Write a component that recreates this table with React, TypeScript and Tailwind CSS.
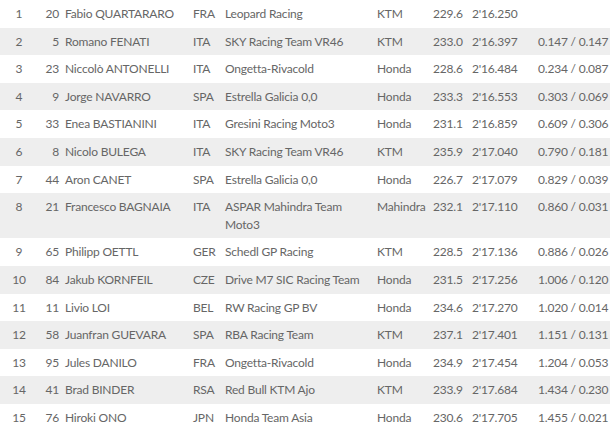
type Row = {
  pos: number
  num: number
  rider: string
  nation: string
  team: string[]
  bike: string
  speed: string
  time: string
  gap: string
}

const rows: Row[] = [
  { pos: 1, num: 20, rider: "Fabio QUARTARARO", nation: "FRA", team: ["Leopard Racing"], bike: "KTM", speed: "229.6", time: "2'16.250", gap: "" },
  { pos: 2, num: 5, rider: "Romano FENATI", nation: "ITA", team: ["SKY Racing Team VR46"], bike: "KTM", speed: "233.0", time: "2'16.397", gap: "0.147 / 0.147" },
  { pos: 3, num: 23, rider: "Niccolò ANTONELLI", nation: "ITA", team: ["Ongetta-Rivacold"], bike: "Honda", speed: "228.6", time: "2'16.484", gap: "0.234 / 0.087" },
  { pos: 4, num: 9, rider: "Jorge NAVARRO", nation: "SPA", team: ["Estrella Galicia 0,0"], bike: "Honda", speed: "233.3", time: "2'16.553", gap: "0.303 / 0.069" },
  { pos: 5, num: 33, rider: "Enea BASTIANINI", nation: "ITA", team: ["Gresini Racing Moto3"], bike: "Honda", speed: "231.1", time: "2'16.859", gap: "0.609 / 0.306" },
  { pos: 6, num: 8, rider: "Nicolo BULEGA", nation: "ITA", team: ["SKY Racing Team VR46"], bike: "KTM", speed: "235.9", time: "2'17.040", gap: "0.790 / 0.181" },
  { pos: 7, num: 44, rider: "Aron CANET", nation: "SPA", team: ["Estrella Galicia 0,0"], bike: "Honda", speed: "226.7", time: "2'17.079", gap: "0.829 / 0.039" },
  { pos: 8, num: 21, rider: "Francesco BAGNAIA", nation: "ITA", team: ["ASPAR Mahindra Team", "Moto3"], bike: "Mahindra", speed: "232.1", time: "2'17.110", gap: "0.860 / 0.031" },
  { pos: 9, num: 65, rider: "Philipp OETTL", nation: "GER", team: ["Schedl GP Racing"], bike: "KTM", speed: "228.5", time: "2'17.136", gap: "0.886 / 0.026" },
  { pos: 10, num: 84, rider: "Jakub KORNFEIL", nation: "CZE", team: ["Drive M7 SIC Racing Team"], bike: "Honda", speed: "231.5", time: "2'17.256", gap: "1.006 / 0.120" },
  { pos: 11, num: 11, rider: "Livio LOI", nation: "BEL", team: ["RW Racing GP BV"], bike: "Honda", speed: "234.6", time: "2'17.270", gap: "1.020 / 0.014" },
  { pos: 12, num: 58, rider: "Juanfran GUEVARA", nation: "SPA", team: ["RBA Racing Team"], bike: "KTM", speed: "237.1", time: "2'17.401", gap: "1.151 / 0.131" },
  { pos: 13, num: 95, rider: "Jules DANILO", nation: "FRA", team: ["Ongetta-Rivacold"], bike: "Honda", speed: "234.9", time: "2'17.454", gap: "1.204 / 0.053" },
  { pos: 14, num: 41, rider: "Brad BINDER", nation: "RSA", team: ["Red Bull KTM Ajo"], bike: "KTM", speed: "233.9", time: "2'17.684", gap: "1.434 / 0.230" },
  { pos: 15, num: 76, rider: "Hiroki ONO", nation: "JPN", team: ["Honda Team Asia"], bike: "Honda", speed: "230.6", time: "2'17.705", gap: "1.455 / 0.021" },
]

export default function App() {
  return (
    <div className="w-[610px] h-[434px] bg-white overflow-hidden font-['Lato',sans-serif] text-[12px] tracking-[-0.2px] leading-[17.6px] text-[#666]">
      {rows.map((r, i) => (
        <div
          key={r.pos}
          className={`grid grid-cols-[38px_27px_128px_32px_152px_56px_39px_66px_1fr] py-[5px] whitespace-nowrap ${
            i % 2 === 1 ? "bg-[#eeeeee]" : "bg-white"
          }`}
        >
          <div className="text-center">{r.pos}</div>
          <div className="text-right pr-[6px]">{r.num}</div>
          <div>{r.rider}</div>
          <div>{r.nation}</div>
          <div>
            {r.team.map((t) => (
              <div key={t}>{t}</div>
            ))}
          </div>
          <div>{r.bike}</div>
          <div>{r.speed}</div>
          <div>{r.time}</div>
          <div>{r.gap}</div>
        </div>
      ))}
    </div>
  )
}
